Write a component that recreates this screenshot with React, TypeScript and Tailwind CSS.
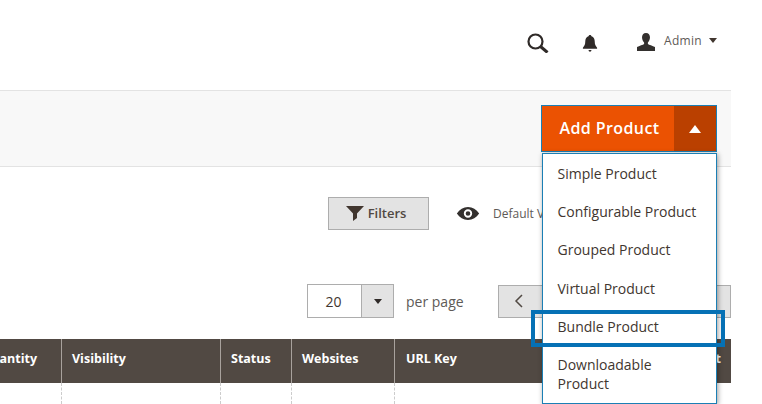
const items = ["Simple Product", "Configurable Product", "Grouped Product", "Virtual Product", "Bundle Product"];

function Search() {
  return (
    <svg width="22" height="20" viewBox="0 0 22 20" fill="none" stroke="#2f2a28" strokeWidth="2.2">
      <circle cx="8.500" cy="8.500" r="7" />
      <path d="M13.500 13.500l7 6" strokeWidth="3" />
    </svg>
  );
}

function Bell() {
  return (
    <svg width="16" height="18" viewBox="0 0 16 19" fill="#2f2a28">
      <path d="M8 1c1 0 1.500.7 1.600 1.500C12 3.300 13 5.500 13 8c0 3 .8 4.500 2.500 6.500v1H.5v-1C2.200 12.500 3 11 3 8c0-2.500 1-4.700 3.400-5.500C6.500 1.700 7 1 8 1z" />
      <path d="M6.500 17h3c0 1-.6 1.700-1.500 1.700S6.500 18 6.500 17z" />
    </svg>
  );
}

function User() {
  return (
    <svg width="20" height="18" viewBox="0 0 20 19" fill="#33302e">
      <path d="M10 0c2.800 0 4.200 2 4.200 4.600 0 2.300-1 4.400-2.200 5.400v1.500c1 1 5 1.700 7.500 3.400V19H.5v-4.100C3 13.200 7 12.500 8 11.500V10C6.800 9 5.800 6.900 5.800 4.600 5.800 2 7.200 0 10 0z" />
    </svg>
  );
}

function Funnel() {
  return (
    <svg width="18" height="15" viewBox="0 0 18 15" fill="#41362f">
      <path d="M0 0h18L11 7.500V12l-4 3V7.500z" />
    </svg>
  );
}

function Eye() {
  return (
    <svg width="24" height="13" viewBox="0 0 24 14" fill="#33302e">
      <path fillRule="evenodd" d="M0 7C3 2.500 7 0 12 0s9 2.500 12 7c-3 4.500-7 7-12 7S3 11.500 0 7zm12-4.500a4.500 4.500 0 100 9 4.500 4.500 0 000-9zm0 2a2.500 2.500 0 110 5 2.500 2.500 0 010-5z" />
    </svg>
  );
}

function Caret({ cls }: { cls: string }) {
  return <span className={`w-0 h-0 border-x-[4px] border-x-transparent border-t-[5px] ${cls}`} />;
}

export default function App() {
  return (
    <div className="relative w-[762px] h-[404px] overflow-hidden bg-white font-['Open_Sans',sans-serif] text-[#41362f]">
      <div className="w-[731px]">
        {/* top bar */}
        <div className="h-[90px] flex items-center justify-end pr-[14px] pb-[5px]">
          <Search />
          <span className="ml-[33px] flex"><Bell /></span>
          <span className="ml-[38px] mb-[2px] flex"><User /></span>
          <span className="ml-[8px] mb-[4px] text-[12px] text-[#5e5a57] tracking-[0.3px]">Admin</span>
          <span className="ml-[7px] mb-[4px] flex"><Caret cls="border-t-[#41362f]" /></span>
        </div>

        {/* page actions */}
        <div className="h-[77px] bg-[#f8f8f8] border-y border-[#e3e3e3] flex items-center justify-end pr-[14px]">
          <div className="flex h-[47px] w-[176px] border border-[#1b7fb5]">
            <div className="flex-1 bg-[#eb5202] flex items-center justify-center pl-[3px] pb-[2px] text-white text-[16px] font-semibold tracking-[0.4px]">Add Product</div>
            <div className="w-[42px] bg-[#ba4000] flex items-center justify-center">
              <span className="w-0 h-0 border-x-[6.5px] border-x-transparent border-b-[8px] border-b-white" />
            </div>
          </div>
        </div>

        {/* filters */}
        <div className="mt-[30px] h-[33px] flex items-center pl-[328px]">
          <div className="w-[101px] h-[33px] bg-[#e3e3e3] border border-[#adadad] flex items-center justify-center gap-[4px] pr-[5px] text-[13px] font-semibold text-[#514943]">
            <Funnel />
            Filters
          </div>
          <span className="ml-[27px] flex"><Eye /></span>
          <span className="ml-[13px] text-[12px] text-[#5e5a57] whitespace-nowrap">Default View</span>
        </div>

        {/* pagination */}
        <div className="mt-[54px] h-[34px] flex items-center pl-[307px]">
          <div className="w-[54px] h-[34px] border border-[#adadad] border-r-0 flex items-center justify-center pr-[2px] text-[14px] text-[#41362f]">20</div>
          <div className="w-[33px] h-[34px] bg-[#e3e3e3] border border-[#adadad] flex items-center justify-center">
            <Caret cls="border-t-[#2f2a28]" />
          </div>
          <span className="ml-[12px] text-[14px] text-[#5e5a57]">per page</span>
          <div className="ml-[34px] flex-1 h-[33px] bg-[#e3e3e3] border border-[#adadad] flex items-center pl-[15px]">
            <svg width="9" height="14" viewBox="0 0 9 14" fill="none" stroke="#514943" strokeWidth="1.500">
              <path d="M8 1L2 7l6 6" />
            </svg>
          </div>
        </div>

        {/* grid header */}
        <div className="mt-[21px] h-[44px] bg-[#514943] flex text-white text-[12.5px] font-bold">
          <div className="w-[62px] border-r border-[#a8a29d] flex items-center justify-end pr-[24px] pb-[4px]">antity</div>
          <div className="w-[159px] border-r border-[#a8a29d] flex items-center pl-[10px] pb-[4px]">Visibility</div>
          <div className="w-[71px] border-r border-[#a8a29d] flex items-center pl-[10px] pb-[4px]">Status</div>
          <div className="w-[103px] border-r border-[#a8a29d] flex items-center pl-[10px] pb-[4px]">Websites</div>
          <div className="flex-1 flex items-center justify-between pl-[11px] pr-[10px] pb-[4px]">
            <span>URL Key</span>
            <span>Layout</span>
          </div>
        </div>
        <div className="h-[21px] flex">
          <div className="w-[62px] border-r border-dashed border-[#cccccc]" />
          <div className="w-[159px] border-r border-dashed border-[#cccccc]" />
          <div className="w-[71px] border-r border-dashed border-[#cccccc]" />
          <div className="w-[103px] border-r border-dashed border-[#cccccc]" />
        </div>
      </div>

      {/* dropdown */}
      <div className="absolute left-[542px] top-[153px] w-[175px] h-[251px] bg-white border border-[#1b7fb5] shadow-[1px_1px_5px_rgba(0,0,0,0.4)] text-[14px] text-[#41362f]">
        {items.map((item) => (
          <div key={item} className="h-[38.4px] flex items-center pl-[14.5px] whitespace-nowrap">{item}</div>
        ))}
        <div className="pl-[14.5px] pt-[9px] leading-[19px] w-[140px]">Downloadable Product</div>
      </div>

      {/* highlight */}
      <div className="absolute left-[531px] top-[310px] w-[194px] h-[37px] border-[4px] border-[#0671b5]" />
    </div>
  );
}
